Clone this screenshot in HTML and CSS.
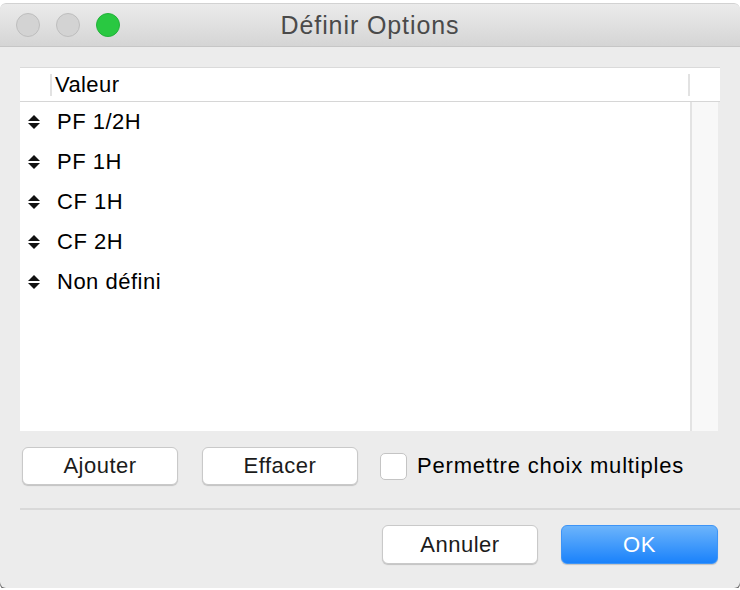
FILE: index.html
```html
<!DOCTYPE html>
<html>
  <head>
    <meta charset="utf-8">
    <title>Définir Options</title>
    <link rel="stylesheet" href="styles.css">
  </head>
  <body>
    <div class="window">
      <div class="titlebar">
        <div class="lights">
          <span class="light"></span>
          <span class="light"></span>
          <span class="light green"></span>
        </div>
        <div class="title">Définir Options</div>
        <div></div>
      </div>
      <div class="content">
        <div class="table">
          <div class="table-head">
            <span class="col-sep"></span>
            <span class="col-name">Valeur</span>
            <span class="col-sep end"></span>
          </div>
          <div class="table-body">
            <div class="rows">
              <div class="row"><span class="sorter"><i class="up"></i><i class="down"></i></span>PF 1/2H</div>
              <div class="row"><span class="sorter"><i class="up"></i><i class="down"></i></span>PF 1H</div>
              <div class="row"><span class="sorter"><i class="up"></i><i class="down"></i></span>CF 1H</div>
              <div class="row"><span class="sorter"><i class="up"></i><i class="down"></i></span>CF 2H</div>
              <div class="row"><span class="sorter"><i class="up"></i><i class="down"></i></span>Non défini</div>
            </div>
            <div class="scroller"></div>
          </div>
        </div>
        <div class="actions">
          <button class="btn">Ajouter</button>
          <button class="btn">Effacer</button>
          <label class="check"><span class="box"></span>Permettre choix multiples</label>
        </div>
      </div>
      <div class="separator"></div>
      <div class="footer">
        <button class="btn">Annuler</button>
        <button class="btn primary">OK</button>
      </div>
    </div>
  </body>
</html>
```

FILE: styles.css
```css
html, body {
  margin: 0;
  padding: 0;
  background: #ffffff;
  font-family: "Liberation Sans", Arial, sans-serif;
}

.window {
  margin-top: 3px;
  height: 585px;
  background: #ececec;
  border-radius: 6px;
  box-shadow: 0 2px 0 #6e6e6e;
  overflow: hidden;
  display: flex;
  flex-direction: column;
}

.titlebar {
  height: 44px;
  border-top: 1px solid #d2d2d2;
  border-bottom: 1px solid #c6c6c6;
  border-radius: 6px 6px 0 0;
  background: linear-gradient(#ebebeb, #d5d5d5);
  display: grid;
  grid-template-columns: 1fr auto 1fr;
  align-items: center;
  box-sizing: border-box;
}

.lights {
  display: flex;
  gap: 16px;
  padding-left: 16px;
}

.light {
  width: 22px;
  height: 22px;
  border-radius: 50%;
  background: #d3d3d3;
  border: 1px solid #bebebe;
}

.light.green {
  background: #29c841;
  border-color: #22b23a;
}

.title {
  font-size: 25px;
  color: #4a4a4a;
  letter-spacing: 0.9px;
}

.content {
  padding: 20px 20px 0 20px;
}

.table {
  height: 364px;
  display: flex;
  flex-direction: column;
  border-top: 1px solid #dadada;
  box-sizing: border-box;
}

.table-head {
  height: 33px;
  background: #ffffff;
  border-bottom: 1px solid #d6d6d6;
  display: flex;
  align-items: center;
  font-size: 22px;
  letter-spacing: 0.4px;
}

.col-sep {
  width: 2px;
  height: 22px;
  background: #e2e2e2;
  margin-left: 30px;
}

.col-sep.end {
  margin-left: auto;
  margin-right: 30px;
}

.col-name {
  margin-left: 3px;
  color: #000;
}

.table-body {
  flex: 1;
  display: flex;
  margin-right: 2px;
  background: #ffffff;
}

.rows {
  flex: 1;
}

.row {
  height: 40px;
  display: flex;
  align-items: center;
  font-size: 22px;
  letter-spacing: 0.5px;
  color: #000;
  padding-left: 8px;
}

.sorter {
  width: 12px;
  display: flex;
  flex-direction: column;
  gap: 2px;
  margin-right: 17px;
}

.sorter i {
  width: 0;
  height: 0;
  border-left: 6px solid transparent;
  border-right: 6px solid transparent;
}

.sorter .up {
  border-bottom: 6px solid #111;
}

.sorter .down {
  border-top: 6px solid #111;
}

.scroller {
  width: 26px;
  border-left: 2px solid #e3e3e3;
  background: #f8f8f8;
}

.actions {
  display: flex;
  align-items: center;
  margin-top: 16px;
  padding-left: 2px;
  gap: 24px;
}

.btn {
  width: 156px;
  height: 38px;
  background: #ffffff;
  border: 1px solid #c9c9c9;
  border-radius: 6px;
  box-shadow: 0 1px 1px rgba(0, 0, 0, 0.18);
  font-family: "Liberation Sans", Arial, sans-serif;
  font-size: 22px;
  letter-spacing: 0.5px;
  color: #1b1b1b;
  padding: 0;
}

.check {
  display: flex;
  align-items: center;
  font-size: 22px;
  color: #000;
  margin-left: -2px;
  letter-spacing: 0.8px;
}

.box {
  width: 25px;
  height: 25px;
  border: 1px solid #c4c4c4;
  border-radius: 5px;
  background: #ffffff;
  margin-right: 10px;
}

.separator {
  height: 2px;
  background: #d9d9d9;
  margin: 23px 0 0 20px;
}

.footer {
  display: flex;
  justify-content: flex-end;
  gap: 23px;
  padding: 15px 22px 0 0;
}

.footer .btn {
  height: 39px;
}

.btn.primary {
  width: 157px;
  background: linear-gradient(#6cb4fb, #1a82fb);
  border-color: #3d94f6;
  color: #ffffff;
}
```
